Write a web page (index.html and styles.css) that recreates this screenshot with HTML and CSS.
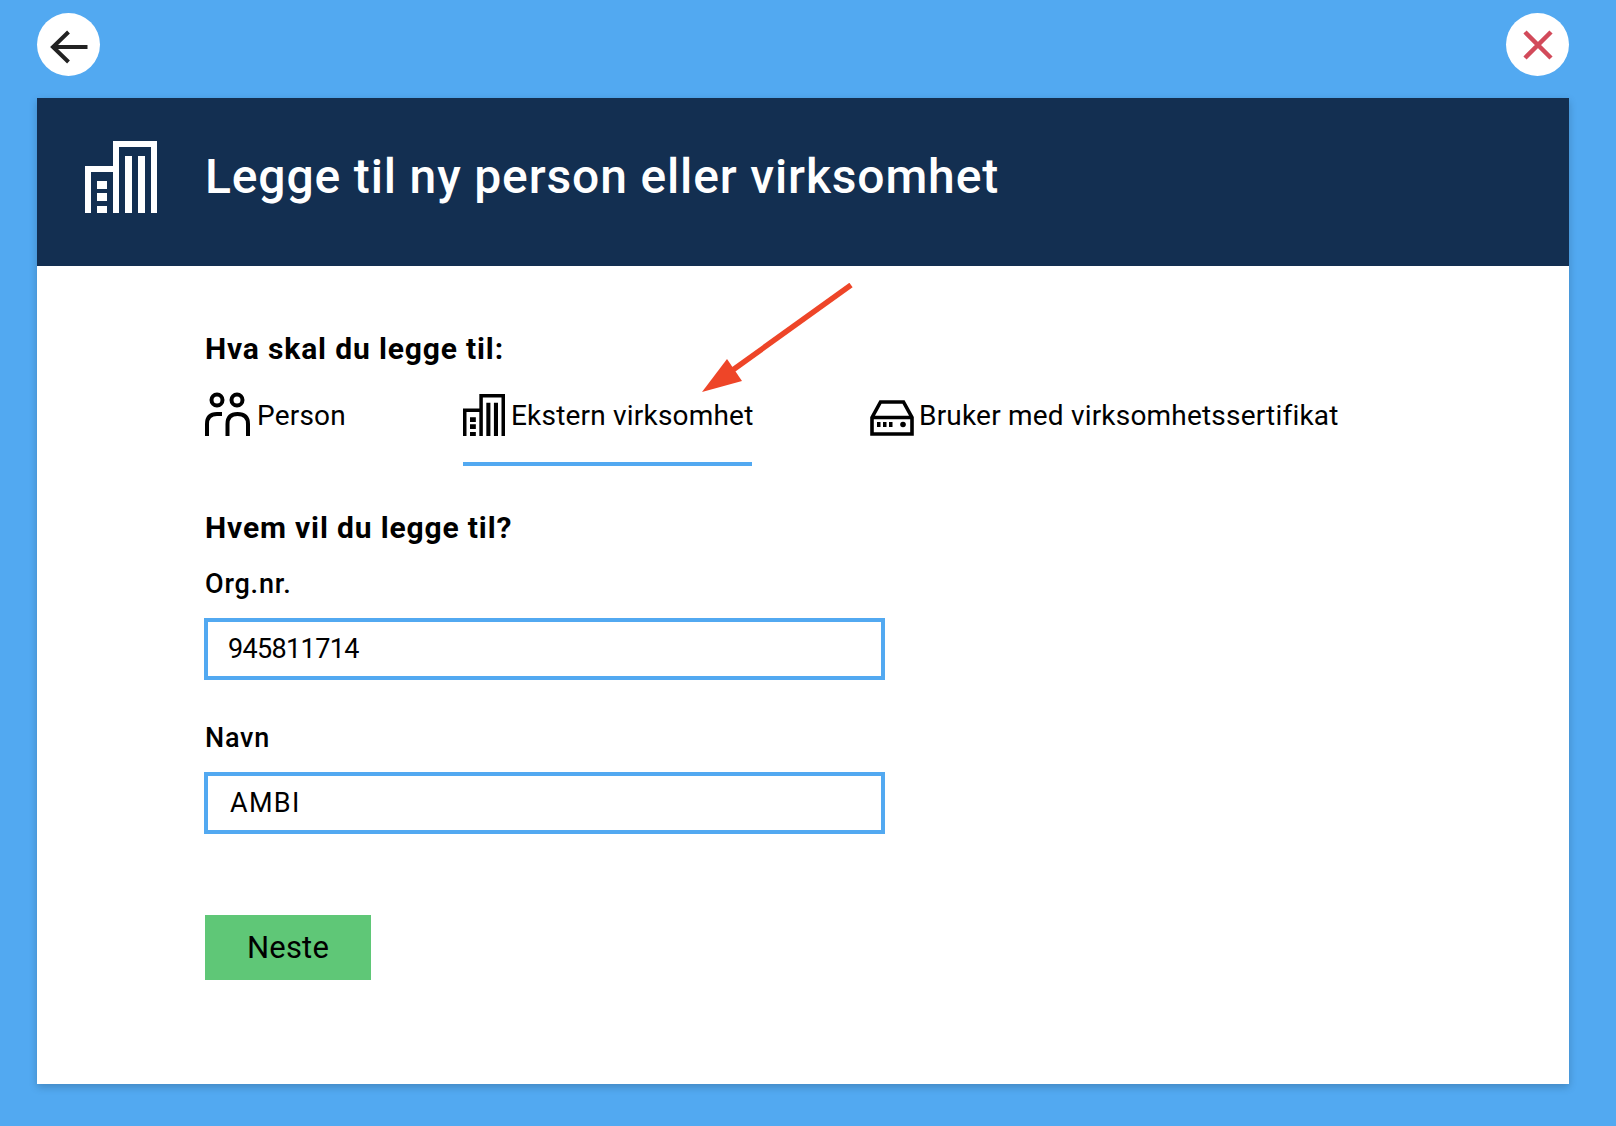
FILE: index.html
```html
<!DOCTYPE html>
<html lang="no">
<head>
<meta charset="utf-8">
<title>Legge til ny person eller virksomhet</title>
<link rel="stylesheet" href="styles.css">
</head>
<body>
<svg class="defs" width="0" height="0" aria-hidden="true">
  <symbol id="building" viewBox="0 0 72 72">
    <path fill="currentColor" fill-rule="evenodd" d="M28 72V25H0V72H6V31H28V72ZM28 72V0H72V72H66V6H34V72ZM40 15H47V72H40ZM53 15H60V72H53ZM12 40H22V48H12ZM12 52H22V60H12ZM12 65H22V72H12Z"/>
  </symbol>
</svg>
<div class="topbar">
  <button class="round" aria-label="Tilbake">
    <svg width="40" height="40" viewBox="0 0 40 40"><path d="M38.500 22H3M19.500 7L4 22L19.500 37" fill="none" stroke="#222" stroke-width="4"/></svg>
  </button>
  <button class="round" aria-label="Lukk">
    <svg width="32" height="32" viewBox="0 0 32 32"><path d="M3 3L29 29M29 3L3 29" fill="none" stroke="#d24a5a" stroke-width="4.500"/></svg>
  </button>
</div>
<main class="panel">
  <header class="panel-head">
    <svg class="head-icon"><use href="#building"/></svg>
    <h1>Legge til ny person eller virksomhet</h1>
  </header>
  <section class="panel-body">
    <svg class="arrow" width="160" height="120" viewBox="0 0 160 120"><path d="M154 2L26 94" stroke="#ee4528" stroke-width="5.500" fill="none"/><path d="M5 109L30 76L45 98Z" fill="#ee4528"/></svg>
    <h2>Hva skal du legge til:</h2>
    <div class="tabs">
      <div class="tab tab-person">
        <svg class="ico-person" width="46" height="44" viewBox="0 0 46 44"><g fill="none" stroke="#000" stroke-width="4"><circle cx="12" cy="8" r="5.500"/><circle cx="32" cy="8" r="5.500"/><path d="M2 44V32Q2 22 12 22H17M22.500 44V32Q22.500 22 32.500 22Q43 22 43 32V44"/></g></svg>
        <span>Person</span>
      </div>
      <div class="tab tab-active">
        <svg class="ico-building"><use href="#building"/></svg>
        <span>Ekstern virksomhet</span>
      </div>
      <div class="tab tab-cert">
        <svg class="ico-cert" width="44" height="36" viewBox="0 0 44 36"><path d="M2 17.500L10.500 2H33.500L42 17.500V34H2ZM2 17.500H42" fill="none" stroke="#000" stroke-width="3.600"/><path d="M7 22H10.500V27H7ZM13 22H16.500V27H13ZM19 22H22.500V27H19Z" fill="#000"/><circle cx="33" cy="24.500" r="2.800" fill="#000"/></svg>
        <span>Bruker med virksomhetssertifikat</span>
      </div>
    </div>
    <h2 class="who">Hvem vil du legge til?</h2>
    <label class="field field-org">
      <span class="label">Org.nr.</span>
      <input class="input" value="945811714">
    </label>
    <label class="field field-name">
      <span class="label label-strong">Navn</span>
      <input class="input input-name" value="AMBI">
    </label>
    <button class="next">Neste</button>
  </section>
</main>
</body>
</html>
```

FILE: styles.css
```css
* { box-sizing: border-box; }
html, body { margin: 0; height: 100%; }
body {
  background: #52a9f1;
  font-family: Roboto, "Liberation Sans", sans-serif;
  color: #000;
  overflow: hidden;
}
.defs { position: absolute; }
.topbar {
  display: flex;
  justify-content: space-between;
  padding: 13px 47px 22px 37px;
}
.round {
  width: 63px;
  height: 63px;
  border: 0;
  border-radius: 50%;
  background: #fff;
  padding: 0;
  display: flex;
  align-items: center;
  justify-content: center;
}
.panel {
  margin: 0 47px 0 37px;
  background: #fff;
  height: 986px;
  box-shadow: 0 3px 8px rgba(0, 0, 0, 0.2);
}
.panel-head {
  height: 168px;
  background: #132f51;
  color: #fff;
  display: flex;
  align-items: center;
  padding: 0 0 10px 48px;
}
.head-icon { width: 72px; height: 72px; margin-right: 48px; }
h1 {
  margin: 0;
  font-size: 48px;
  font-weight: 500;
  letter-spacing: 0.850px;
  line-height: 56px;
}
.panel-body {
  position: relative;
  padding: 66px 0 0 168px;
}
.arrow { position: absolute; left: 660px; top: 17px; }
h2 {
  margin: 0;
  font-size: 30px;
  font-weight: 700;
  line-height: 34px;
  letter-spacing: 0.850px;
}
.tabs {
  display: flex;
  margin-top: 25px;
}
.tab {
  display: flex;
  align-items: flex-start;
  height: 75px;
  font-size: 28px;
  letter-spacing: 0.200px;
  line-height: 34px;
  white-space: nowrap;
}
.tab span { margin-top: 8px; }
.tab-person { width: 258px; }
.tab-person span { margin-left: 6px; }
.ico-person { margin-top: 1px; }
.tab-active {
  width: 289px;
  border-bottom: 4px solid #52a9f1;
}
.ico-building { width: 42px; height: 42px; margin-top: 3px; margin-right: 6px; flex: none; }
.tab-cert { margin-left: 118px; }
.ico-cert { margin-top: 9px; margin-right: 5px; }
.who { margin-top: 45px; }
.field { display: block; }
.field-org { margin-top: 22px; }
.field-name { margin-top: 41px; }
.label {
  display: block;
  font-size: 27px;
  font-weight: 500;
  line-height: 34px;
  letter-spacing: 0.800px;
}
.input {
  display: block;
  width: 681px;
  height: 62px;
  margin: 17px 0 0 -1px;
  border: 4px solid #52a9f1;
  border-radius: 0;
  background: #fff;
  padding: 0 0 0 20px;
  font: 400 27px Roboto, "Liberation Sans", sans-serif;
  letter-spacing: -0.650px;
  color: #000;
  outline: 0;
}
.input-name { padding-left: 22px; letter-spacing: 1.300px; }
.next {
  display: block;
  width: 166px;
  height: 65px;
  margin-top: 81px;
  border: 0;
  background: #5fc777;
  font: 400 31px Roboto, "Liberation Sans", sans-serif;
  letter-spacing: 0.200px;
  color: #000;
}
```
